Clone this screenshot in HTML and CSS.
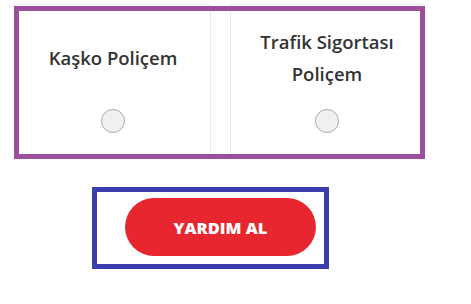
FILE: index.html
```html
<!DOCTYPE html>
<html lang="tr">
<head>
<meta charset="utf-8">
<title>Poliçe Seçimi</title>
<link rel="stylesheet" href="styles.css">
</head>
<body>
<div class="cards-wrap">
  <div class="cards">
    <div class="card">
      <div class="title-box"><span class="title">Kaşko Poliçem</span></div>
      <span class="radio"></span>
    </div>
    <div class="card">
      <div class="title-box"><span class="title">Trafik Sigortası<br>Poliçem</span></div>
      <span class="radio"></span>
    </div>
  </div>
  <div class="mark-purple"></div>
</div>
<div class="mark-blue">
  <button class="help-btn" type="button">YARDIM AL</button>
</div>
</body>
</html>
```

FILE: styles.css
```css
html, body {
  margin: 0;
  padding: 0;
  background: #ffffff;
}
body {
  font-family: "Open Sans", "Liberation Sans", sans-serif;
}
.cards-wrap {
  position: relative;
  margin-left: 15px;
  width: 409px;
  padding-top: 4px;
}
.cards {
  display: grid;
  grid-template-columns: 196px 194px;
  column-gap: 19px;
}
.card {
  box-sizing: border-box;
  height: 154px;
  border: 1px solid #ececec;
  background: #ffffff;
  display: flex;
  flex-direction: column;
  align-items: center;
}
.title-box {
  height: 106px;
  margin-bottom: -2px;
  display: flex;
  align-items: center;
  justify-content: center;
  text-align: center;
}
.title {
  font-size: 18.5px;
  font-weight: 600;
  line-height: 32px;
  color: #333333;
}
.radio {
  box-sizing: border-box;
  width: 24px;
  height: 24px;
  border-radius: 50%;
  border: 1px solid #a9a9a9;
  background: #f0f0f0;
}
.mark-purple {
  position: absolute;
  left: -1px;
  top: 6px;
  width: 411px;
  height: 153px;
  box-sizing: border-box;
  border: 5px solid #9b4f9d;
  pointer-events: none;
}
.mark-blue {
  margin-top: 29px;
  margin-left: 92px;
  width: 237px;
  box-sizing: border-box;
  border: 5px solid #3b3fae;
  padding: 6px 8px 8px 28px;
}
.help-btn {
  display: block;
  width: 191px;
  height: 58px;
  border: none;
  border-radius: 29px;
  background: #e8262f;
  color: #ffffff;
  font-family: "Open Sans", "Liberation Sans", sans-serif;
  font-size: 16.5px;
  font-weight: 800;
  padding: 0;
  text-align: center;
}
```
